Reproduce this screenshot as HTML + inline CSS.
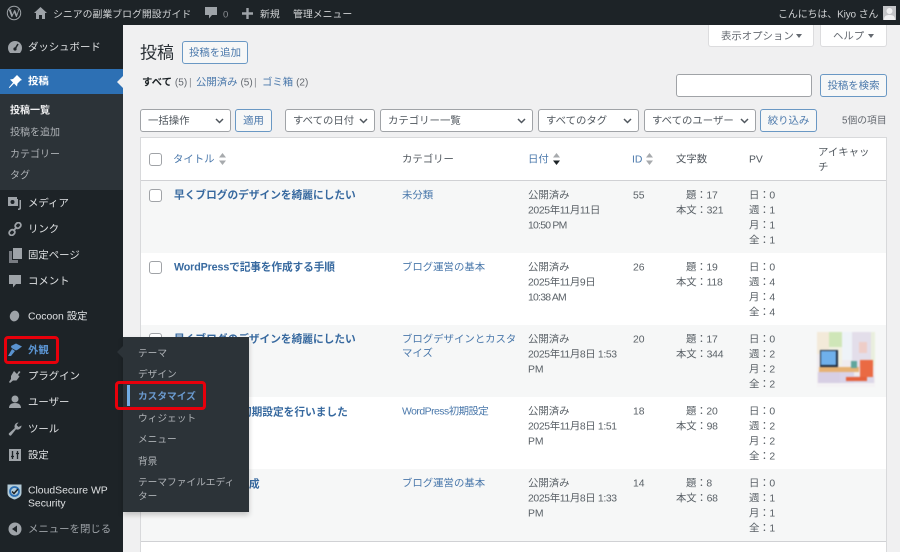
<!DOCTYPE html>
<html lang="ja"><head><meta charset="utf-8"><title>投稿</title>
<style>
*{box-sizing:border-box}
html,body{margin:0;padding:0;background:#f0f0f1}
body{width:900px;height:552px;overflow:hidden;position:relative;font-family:"Liberation Sans","Noto Sans CJK JP",sans-serif;font-size:10.4px;color:#5a6167}
#p{position:absolute;left:0;top:0;width:900px;height:552px;overflow:hidden;background:#f0f0f1;filter:blur(.35px)}
.a{position:absolute}
.t{position:absolute;white-space:nowrap;line-height:16px;height:16px;transform:translateY(1.5px)}
.w{color:#dfe1e3}.s{color:#aeb2b6}.l{color:#4a78ab}.b{font-weight:700}
.f{font-size:9.7px}
.u{font-size:10px}
.n{letter-spacing:-.2px}
.d{letter-spacing:-.35px}
.m{letter-spacing:-.75px}
.ti{color:#37699f;font-weight:700;font-size:10.7px}
.box{position:absolute;background:#fff;border:1px solid #a0a3a7;border-radius:3px;height:23px;line-height:23px;padding-left:7px;color:#50575e;white-space:nowrap}
.box svg{position:absolute;right:6px;top:8px}
.btn{position:absolute;background:#f6f7f7;border:1px solid #6a98c4;border-radius:3px;color:#4a78ab;text-align:center;white-space:nowrap;height:23px;line-height:23px}
.cb{position:absolute;width:13px;height:13px;background:#fff;border:1px solid #a0a3a7;border-radius:3px;left:149px}
.ic{position:absolute;fill:#9ea3a8}
.red{position:absolute;border:3px solid #e8000b;border-radius:4px}
</style></head><body><div id="p">

<!-- content table -->
<div class="a" style="left:140px;top:137px;width:747px;height:425px;background:#fff;border:1px solid #d8d9db"></div>
<div class="a" style="left:141px;top:180px;width:745px;height:1px;background:#d0d1d4"></div>
<div class="a" style="left:141px;top:181px;width:745px;height:72px;background:#f6f7f7"></div>
<div class="a" style="left:141px;top:325px;width:745px;height:72px;background:#f6f7f7"></div>
<div class="a" style="left:141px;top:469px;width:745px;height:72px;background:#f6f7f7"></div>
<div class="a" style="left:141px;top:541px;width:745px;height:1px;background:#d0d1d4"></div>

<!-- page header -->
<div class="t" style="left:140px;top:41px;font-size:17px;line-height:22px;height:22px;color:#2a3036">投稿</div>
<div class="btn" style="left:182px;top:41px;width:66px;height:23px">投稿を追加</div>
<div class="a" style="left:708px;top:25px;width:106px;height:22px;background:#fff;border:1px solid #dcdcde;border-top:0;border-radius:0 0 3px 3px"></div>
<div class="t" style="left:721px;top:28px;color:#646970">表示オプション</div>
<div class="a" style="left:796px;top:34px;border:3px solid transparent;border-top:4px solid #646970"></div>
<div class="a" style="left:820px;top:25px;width:67px;height:22px;background:#fff;border:1px solid #dcdcde;border-top:0;border-radius:0 0 3px 3px"></div>
<div class="t" style="left:833px;top:28px;color:#646970">ヘルプ</div>
<div class="a" style="left:868px;top:34px;border:3px solid transparent;border-top:4px solid #646970"></div>

<div class="t" style="left:142px;top:74px;color:#1d2327"><b>すべて</b> <span style="color:#646970;font-size:10px">(5)</span></div>
<div class="t" style="left:189px;top:74px;color:#8c8f94">|</div>
<div class="t l" style="left:196px;top:74px">公開済み <span style="color:#646970;font-size:10px">(5)</span></div>
<div class="t" style="left:254px;top:74px;color:#8c8f94">|</div>
<div class="t l" style="left:262px;top:74px">ゴミ箱 <span style="color:#646970;font-size:10px">(2)</span></div>

<div class="box" style="left:676px;top:74px;width:136px"></div>
<div class="btn" style="left:820px;top:74px;width:67px">投稿を検索</div>

<!-- toolbar -->
<div class="box" style="left:140px;top:109px;width:91px">一括操作<svg width="9" height="6" viewBox="0 0 9 6"><path d="M1 1l3.500 3.500L8 1" fill="none" stroke="#50575e" stroke-width="1.500"/></svg></div>
<div class="btn" style="left:235px;top:109px;width:37px">適用</div>
<div class="box" style="left:285px;top:109px;width:90px">すべての日付<svg width="9" height="6" viewBox="0 0 9 6"><path d="M1 1l3.500 3.500L8 1" fill="none" stroke="#50575e" stroke-width="1.500"/></svg></div>
<div class="box" style="left:380px;top:109px;width:153px">カテゴリー一覧<svg width="9" height="6" viewBox="0 0 9 6"><path d="M1 1l3.500 3.500L8 1" fill="none" stroke="#50575e" stroke-width="1.500"/></svg></div>
<div class="box" style="left:538px;top:109px;width:101px">すべてのタグ<svg width="9" height="6" viewBox="0 0 9 6"><path d="M1 1l3.500 3.500L8 1" fill="none" stroke="#50575e" stroke-width="1.500"/></svg></div>
<div class="box" style="left:644px;top:109px;width:112px">すべてのユーザー<svg width="9" height="6" viewBox="0 0 9 6"><path d="M1 1l3.500 3.500L8 1" fill="none" stroke="#50575e" stroke-width="1.500"/></svg></div>
<div class="btn" style="left:760px;top:109px;width:57px">絞り込み</div>
<div class="t" style="left:842px;top:112px;color:#646970;font-size:9.8px">5個の項目</div>

<!-- table header -->
<div class="cb" style="top:153px"></div>
<div class="t l" style="left:173px;top:151px">タイトル</div>
<svg class="a" style="left:219px;top:153px" width="7" height="12" viewBox="0 0 7 12"><path d="M3.500 0L7 4.500H0zM3.500 12L0 7.500h7z" fill="#a7aaad"/></svg>
<div class="t" style="left:402px;top:151px;color:#50575e">カテゴリー</div>
<div class="t l" style="left:528px;top:151px">日付</div>
<svg class="a" style="left:553px;top:153px" width="7" height="12" viewBox="0 0 7 12"><path d="M3.500 0L7 4.500H0z" fill="#a7aaad"/><path d="M3.500 12L0 7.500h7z" fill="#1d2327"/></svg>
<div class="t l" style="left:632px;top:151px">ID</div>
<svg class="a" style="left:646px;top:153px" width="7" height="12" viewBox="0 0 7 12"><path d="M3.500 0L7 4.500H0zM3.500 12L0 7.500h7z" fill="#a7aaad"/></svg>
<div class="t" style="left:676px;top:151px;color:#50575e">文字数</div>
<div class="t" style="left:749px;top:151px;color:#50575e">PV</div>
<div class="t" style="left:818px;top:144px;color:#50575e">アイキャッ</div>
<div class="t" style="left:818px;top:159px;color:#50575e">チ</div>

<!-- row 1 -->
<div class="cb" style="top:189px"></div>
<div class="t ti" style="left:174px;top:186px">早くブログのデザインを綺麗にしたい</div>
<div class="t l" style="left:402px;top:187px">未分類</div>
<div class="t" style="left:528px;top:187px">公開済み</div>
<div class="t d" style="left:528px;top:202px">2025年11月11日</div>
<div class="t m" style="left:528px;top:217px">10:50 PM</div>
<div class="t" style="left:633px;top:187px">55</div>
<div class="t n" style="left:686px;top:187px">題：17</div>
<div class="t n" style="left:676px;top:202px">本文：321</div>
<div class="t n" style="left:749px;top:187px">日：0</div>
<div class="t n" style="left:749px;top:202px">週：1</div>
<div class="t n" style="left:749px;top:217px">月：1</div>
<div class="t n" style="left:749px;top:232px">全：1</div>

<!-- row 2 -->
<div class="cb" style="top:261px"></div>
<div class="t ti" style="left:174px;top:258px;letter-spacing:-.12px">WordPressで記事を作成する手順</div>
<div class="t l" style="left:402px;top:259px">ブログ運営の基本</div>
<div class="t" style="left:528px;top:259px">公開済み</div>
<div class="t d" style="left:528px;top:274px">2025年11月9日</div>
<div class="t m" style="left:528px;top:289px">10:38 AM</div>
<div class="t" style="left:633px;top:259px">26</div>
<div class="t n" style="left:686px;top:259px">題：19</div>
<div class="t n" style="left:676px;top:274px">本文：118</div>
<div class="t n" style="left:749px;top:259px">日：0</div>
<div class="t n" style="left:749px;top:274px">週：4</div>
<div class="t n" style="left:749px;top:289px">月：4</div>
<div class="t n" style="left:749px;top:304px">全：4</div>

<!-- row 3 -->
<div class="cb" style="top:333px"></div>
<div class="t ti" style="left:174px;top:330px">早くブログのデザインを綺麗にしたい</div>
<div class="t l" style="left:402px;top:331px">ブログデザインとカスタ</div>
<div class="t l" style="left:402px;top:345px">マイズ</div>
<div class="t" style="left:528px;top:331px">公開済み</div>
<div class="t d" style="left:528px;top:346px">2025年11月8日 1:53</div>
<div class="t" style="left:528px;top:361px">PM</div>
<div class="t" style="left:633px;top:331px">20</div>
<div class="t n" style="left:686px;top:331px">題：17</div>
<div class="t n" style="left:676px;top:346px">本文：344</div>
<div class="t n" style="left:749px;top:331px">日：0</div>
<div class="t n" style="left:749px;top:346px">週：2</div>
<div class="t n" style="left:749px;top:361px">月：2</div>
<div class="t n" style="left:749px;top:376px">全：2</div>
<svg class="a" style="left:817px;top:332px;filter:blur(.8px)" width="58" height="55" viewBox="0 0 58 55">
<rect width="58" height="55" fill="#f0ecef"/>
<rect x="0" y="0" width="12" height="22" fill="#f3ead9"/>
<rect x="12" y="0" width="13" height="15" fill="#cfe6b8"/>
<rect x="12" y="15" width="13" height="18" fill="#f2f1e2"/>
<rect x="25" y="0" width="10" height="28" fill="#eef3f8"/>
<rect x="35" y="0" width="19" height="36" fill="#e3deea"/>
<rect x="42" y="10" width="8" height="11" fill="#eecdc8"/>
<rect x="54" y="0" width="4" height="34" fill="#e9efdd"/>
<rect x="3" y="18" width="18" height="17" fill="#1d2b3f"/>
<rect x="4" y="19" width="15" height="14" fill="#6fb0ec"/>
<rect x="2" y="35" width="40" height="5" fill="#e6b274"/>
<rect x="1" y="40" width="22" height="12" fill="#d7cfe4"/>
<rect x="23" y="40" width="14" height="12" fill="#d9d3e8"/>
<rect x="37" y="44" width="20" height="8" fill="#dcd7e8"/>
<rect x="43" y="28" width="13" height="17" fill="#ea6a43"/>
<rect x="29" y="45" width="21" height="4" fill="#e5613c"/>
<rect x="34" y="29" width="6" height="7" fill="#5fa59c"/>
<rect x="0" y="51" width="58" height="4" fill="#f4f2f4"/>
</svg>

<!-- row 4 -->
<div class="t ti" style="left:174px;top:403px">WordPressの初期設定を行いました</div>
<div class="t l" style="left:402px;top:403px;letter-spacing:-.5px">WordPress初期設定</div>
<div class="t" style="left:528px;top:403px">公開済み</div>
<div class="t d" style="left:528px;top:418px">2025年11月8日 1:51</div>
<div class="t" style="left:528px;top:433px">PM</div>
<div class="t" style="left:633px;top:403px">18</div>
<div class="t n" style="left:686px;top:403px">題：20</div>
<div class="t n" style="left:676px;top:418px">本文：98</div>
<div class="t n" style="left:749px;top:403px">日：0</div>
<div class="t n" style="left:749px;top:418px">週：2</div>
<div class="t n" style="left:749px;top:433px">月：2</div>
<div class="t n" style="left:749px;top:448px">全：2</div>

<!-- row 5 -->
<div class="t ti" style="left:174px;top:475px">記事の構成を作成</div>
<div class="t l" style="left:402px;top:475px">ブログ運営の基本</div>
<div class="t" style="left:528px;top:475px">公開済み</div>
<div class="t d" style="left:528px;top:490px">2025年11月8日 1:33</div>
<div class="t" style="left:528px;top:505px">PM</div>
<div class="t" style="left:633px;top:475px">14</div>
<div class="t n" style="left:686px;top:475px">題：8</div>
<div class="t n" style="left:676px;top:490px">本文：68</div>
<div class="t n" style="left:749px;top:475px">日：0</div>
<div class="t n" style="left:749px;top:490px">週：1</div>
<div class="t n" style="left:749px;top:505px">月：1</div>
<div class="t n" style="left:749px;top:520px">全：1</div>

<!-- sidebar -->
<div class="a" style="left:0;top:25px;width:123px;height:527px;background:#1d2327"></div>
<div class="a" style="left:0;top:69px;width:123px;height:25px;background:#2d70b4"></div>
<div class="a" style="left:117px;top:76px;border:6px solid transparent;border-left:0;border-right:6px solid #f0f0f1"></div>
<div class="a" style="left:0;top:94px;width:123px;height:96px;background:#2c3338"></div>

<div class="t w" style="left:28px;top:39px">ダッシュボード</div>
<div class="t b" style="left:28px;top:73px;color:#fff">投稿</div>
<div class="t b u" style="left:10px;top:102px;color:#f0f0f1">投稿一覧</div>
<div class="t s u" style="left:10px;top:124px">投稿を追加</div>
<div class="t s u" style="left:10px;top:146px">カテゴリー</div>
<div class="t s u" style="left:10px;top:167px">タグ</div>
<div class="t w" style="left:28px;top:195px">メディア</div>
<div class="t w" style="left:28px;top:221px">リンク</div>
<div class="t w" style="left:28px;top:247px">固定ページ</div>
<div class="t w" style="left:28px;top:273px">コメント</div>
<div class="t w" style="left:28px;top:308px">Cocoon 設定</div>
<div class="t b" style="left:28px;top:342px;color:#5a93d0">外観</div>
<div class="t w" style="left:28px;top:368px">プラグイン</div>
<div class="t w" style="left:28px;top:394px">ユーザー</div>
<div class="t w" style="left:28px;top:421px">ツール</div>
<div class="t w" style="left:28px;top:447px">設定</div>
<div class="t w" style="left:28px;top:482px">CloudSecure WP</div>
<div class="t w" style="left:28px;top:495px">Security</div>
<div class="t" style="left:28px;top:521px;color:#9ea3a8">メニューを閉じる</div>

<!-- sidebar icons -->
<svg class="ic" style="left:7px;top:40px" width="16" height="14" viewBox="0 0 16 14"><path d="M8 1a7 7 0 0 0-7 7c0 2 .8 3.600 2 5h10c1.200-1.400 2-3 2-5a7 7 0 0 0-7-7z"/><path d="M8 9l3-5" stroke="#1d2327" stroke-width="1.500"/><circle cx="8" cy="9" r="1.600" fill="#1d2327"/></svg>
<svg class="a" style="left:8px;top:74px" width="15" height="15" viewBox="0 0 15 15"><path d="M9 1l5 5-1.500.5-3 3-.5 3-3-3L1.500 14 .8 13.500 5 8.500 2 5.500l3-.5 3-3z" fill="#fff"/></svg>
<svg class="ic" style="left:7px;top:196px" width="16" height="15" viewBox="0 0 16 15"><path d="M1 1h9v2h1v7H1z"/><circle cx="5.500" cy="6" r="2" fill="#1d2327"/><path d="M12.500 4H14v8c0 1.500-1 2-3 2v-1.500c1 0 1.500 0 1.500-1z"/></svg>
<svg class="a" style="left:8px;top:222px" width="14" height="14" viewBox="0 0 14 14" fill="none" stroke="#9ea3a8" stroke-width="1.800"><rect x="7" y="1" width="6" height="5" rx="2.500" transform="rotate(-45 10 3.500)"/><rect x="1" y="8" width="6" height="5" rx="2.500" transform="rotate(-45 4 10.500)"/><path d="M5 9l4-4"/></svg>
<svg class="ic" style="left:8px;top:248px" width="14" height="15" viewBox="0 0 14 15"><path d="M5 0h9v11H5z"/><path d="M1 3h3v9h6v3H1z" fill="#787c82"/></svg>
<svg class="ic" style="left:8px;top:274px" width="14" height="14" viewBox="0 0 14 14"><path d="M1 1h12v9H8l-3 3.500V10H1z"/></svg>
<svg class="ic" style="left:9px;top:310px" width="11" height="12" viewBox="0 0 11 12"><ellipse cx="5.500" cy="6" rx="4.600" ry="5.400" transform="rotate(20 5.500 6)"/></svg>
<svg class="a" style="left:7px;top:343px" width="16" height="14" viewBox="0 0 16 14"><path d="M4 3l5-2.500 6 3-4 3-2 1L4.500 5z" fill="#5a93d0"/><path d="M5 6l3 2-4 5H1z" fill="#5a93d0"/></svg>
<svg class="ic" style="left:8px;top:369px" width="14" height="14" viewBox="0 0 14 14"><path d="M6 2l3 3 2-3 1.500 1L10 6l1.500 1.500-3 4H5L2 14l-1-1 2-3V7z"/></svg>
<svg class="ic" style="left:8px;top:395px" width="14" height="14" viewBox="0 0 14 14"><circle cx="7" cy="4" r="3.500"/><path d="M1 13c0-3 2-5 6-5s6 2 6 5z"/></svg>
<svg class="ic" style="left:8px;top:422px" width="14" height="14" viewBox="0 0 14 14"><path d="M13.500 3.500a4 4 0 0 1-5.500 3.800L3 13.500c-1 .8-3-1-2-2.200L6.800 6A4 4 0 0 1 10.500.5L8.500 3l2 2z"/></svg>
<svg class="ic" style="left:8px;top:448px" width="14" height="14" viewBox="0 0 14 14"><path d="M1 1h12v12H1z"/><path d="M4.500 3v8M9.500 3v8M3 8.500h3M8 5.500h3" stroke="#1d2327" stroke-width="1.300"/></svg>
<svg class="a" style="left:7px;top:484px" width="15" height="16" viewBox="0 0 15 16"><path d="M.5.500h14V9c0 3.500-3.500 5.500-7 6.500C4 14.500.5 12.500.5 9z" fill="#b3cbd8"/><circle cx="7.500" cy="7.500" r="4.500" fill="none" stroke="#2d70b4" stroke-width="1.800"/><path d="M5 7.500l2 2 4-4.500" fill="none" stroke="#1d2327" stroke-width="1.500"/></svg>
<svg class="a" style="left:8px;top:522px" width="14" height="14" viewBox="0 0 14 14"><circle cx="7" cy="7" r="6.500" fill="#9ea3a8"/><path d="M9 3.500v7L4 7z" fill="#1d2327"/></svg>

<!-- flyout -->
<div class="a" style="left:123px;top:337px;width:126px;height:175px;background:#2c3338;box-shadow:0 3px 5px rgba(0,0,0,.2)"></div>
<div class="a" style="left:117px;top:346px;border:6px solid transparent;border-left:0;border-right:6px solid #2c3338"></div>
<div class="a" style="left:127px;top:385px;width:3px;height:21px;background:#72aee6"></div>
<div class="t s f" style="left:138px;top:345px">テーマ</div>
<div class="t s f" style="left:138px;top:366px">デザイン</div>
<div class="t f" style="left:138px;top:388px;color:#6b9bd0;font-weight:700">カスタマイズ</div>
<div class="t s f" style="left:138px;top:410px">ウィジェット</div>
<div class="t s f" style="left:138px;top:431px">メニュー</div>
<div class="t s f" style="left:138px;top:453px">背景</div>
<div class="t s f" style="left:138px;top:474px">テーマファイルエディ</div>
<div class="t s f" style="left:138px;top:488px">ター</div>

<div class="red" style="left:4px;top:336px;width:55px;height:28px"></div>
<div class="red" style="left:115px;top:381px;width:91px;height:29px"></div>

<!-- admin bar -->
<div class="a" style="left:0;top:0;width:900px;height:25px;background:#1d2327"></div>
<svg class="a" style="left:6px;top:5px" width="16" height="16" viewBox="0 0 16 16"><circle cx="8" cy="8" r="7.200" fill="#9ea3a8"/><circle cx="8" cy="8" r="6.200" fill="#1d2327"/><text x="8" y="12" font-family="Liberation Serif, serif" font-size="12" font-weight="700" text-anchor="middle" fill="#9ea3a8">W</text></svg>
<svg class="ic" style="left:34px;top:7px" width="13" height="12" viewBox="0 0 13 12"><path d="M6.500 0L13 6h-2v6H8V8H5v4H2V6H0z"/></svg>
<div class="t" style="left:53px;top:6px;font-size:9.9px;color:#d0d2d4">シニアの副業ブログ開設ガイド</div>
<svg class="ic" style="left:205px;top:7px" width="12" height="12" viewBox="0 0 12 12"><path d="M0 0h12v8H7l-3 3.500V8H0z"/></svg>
<div class="t" style="left:223px;top:6px;font-size:9.5px;color:#8c8f94">0</div>
<svg class="ic" style="left:242px;top:8px" width="11" height="11" viewBox="0 0 11 11"><path d="M4.300 0h2.400v4.300H11v2.400H6.700V11H4.300V6.700H0V4.300h4.300z"/></svg>
<div class="t" style="left:260px;top:6px;font-size:9.9px;color:#d0d2d4">新規</div>
<div class="t" style="left:293px;top:6px;font-size:9.9px;color:#d0d2d4">管理メニュー</div>
<div class="t" style="left:778px;top:6px;font-size:10px;color:#d0d2d4;letter-spacing:-.15px">こんにちは、Kiyo さん</div>
<svg class="a" style="left:883px;top:6px" width="13" height="14" viewBox="0 0 13 14"><rect width="13" height="14" fill="#c3c4c7"/><circle cx="6.500" cy="5" r="3" fill="#f0f0f1"/><path d="M1 14c0-4 2-5 5.500-5s5.500 1 5.500 5z" fill="#f0f0f1"/></svg>
</div></body></html>
